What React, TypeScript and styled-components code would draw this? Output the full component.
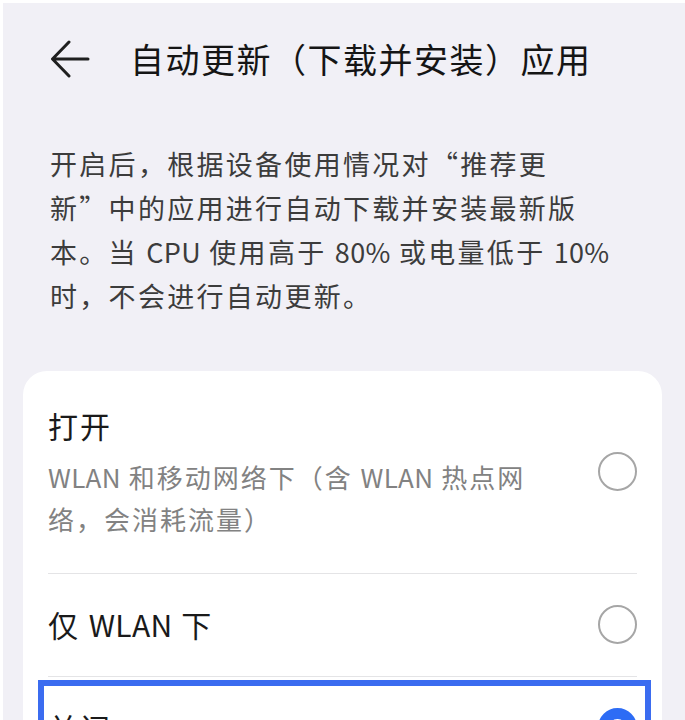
import React from "react";
import styled, { createGlobalStyle } from "styled-components";

const GlobalStyle = createGlobalStyle`
  html, body {
    margin: 0;
    padding: 0;
    background: #ffffff;
  }
  body {
    padding: 3px 0 0 3px;
    font-family: "Noto Sans CJK SC", "Noto Sans", sans-serif;
    overflow: hidden;
  }
`;

const Page = styled.div`
  background: #f1f0f6;
  min-height: 720px;
  display: flex;
  flex-direction: column;
`;

const Header = styled.header`
  height: 112px;
  display: flex;
  align-items: center;
  padding-left: 47px;
  gap: 40px;
`;

const BackButton = styled.button`
  border: none;
  background: none;
  padding: 0;
  width: 40px;
  height: 38px;
  display: flex;
  align-items: center;
  justify-content: center;
  cursor: pointer;
`;

const Title = styled.h1`
  margin: 0;
  font-size: 34px;
  font-weight: 400;
  letter-spacing: 1.5px;
  color: #151515;
  line-height: 44px;
  white-space: nowrap;
`;

const Description = styled.p`
  margin: 27px 0 0;
  padding: 0 40px 0 47px;
  font-size: 27px;
  line-height: 44px;
  letter-spacing: 2.3px;
  color: #3c3c3c;
`;

const Line = styled.span`
  display: block;
  white-space: nowrap;
`;

/* Latin words sit tighter than the CJK run around them */
const Latin = styled.span`
  letter-spacing: 0.3px;
`;

const Card = styled.section`
  margin: 53px 23px 0 20px;
  background: #ffffff;
  border-radius: 24px;
  padding: 0 25px 0 25px;
  display: flex;
  flex-direction: column;
`;

const Option = styled.div<{ $padTop: number; $padBottom: number; $focused?: boolean }>`
  position: relative;
  display: flex;
  align-items: center;
  justify-content: space-between;
  gap: 20px;
  padding: ${(p) => p.$padTop}px 0 ${(p) => p.$padBottom}px;
  & + & {
    border-top: 1px solid #e4e4e6;
  }
  ${(p) =>
    p.$focused &&
    `
    &::before {
      content: "";
      position: absolute;
      top: 3px;
      left: -10px;
      right: -14px;
      height: 200px;
      border: 6px solid #3b6cf0;
      pointer-events: none;
    }
  `}
`;

const OptionText = styled.div`
  display: flex;
  flex-direction: column;
  gap: 9px;
`;

const OptionTitle = styled.div`
  font-size: 30px;
  line-height: 44px;
  letter-spacing: 2px;
  color: #1a1a1a;
  white-space: nowrap;
`;

const OptionHint = styled.div`
  font-size: 26px;
  line-height: 42px;
  letter-spacing: 2px;
  color: #828282;
`;

const Radio = styled.span<{ $checked?: boolean }>`
  flex: none;
  width: 39px;
  height: 39px;
  box-sizing: border-box;
  border-radius: 50%;
  border: ${(p) => (p.$checked ? "11px solid #2d6cf5" : "2px solid #a6a6a6")};
  background: #ffffff;
`;

const BackArrow = () => (
  <svg width="40" height="38" viewBox="0 0 40 38" fill="none">
    <path
      d="M38 19H3M19 2L2.5 19L19 36"
      stroke="#1f1f1f"
      strokeWidth="3"
      strokeLinecap="round"
      strokeLinejoin="round"
    />
  </svg>
);

export default function App() {
  return (
    <>
      <GlobalStyle />
      <Page>
        <Header>
          <BackButton aria-label="返回">
            <BackArrow />
          </BackButton>
          <Title>自动更新（下载并安装）应用</Title>
        </Header>
        <Description>
          <Line>开启后，根据设备使用情况对“推荐更</Line>
          <Line>新”中的应用进行自动下载并安装最新版</Line>
          <Line>
            本。当 <Latin>CPU</Latin> 使用高于 <Latin>80%</Latin> 或电量低于 <Latin>10%</Latin>
          </Line>
          <Line>时，不会进行自动更新。</Line>
        </Description>
        <Card>
          <Option $padTop={32} $padBottom={33}>
            <OptionText>
              <OptionTitle>打开</OptionTitle>
              <OptionHint>
                <Line>
                  <Latin>WLAN</Latin> 和移动网络下（含 <Latin>WLAN</Latin> 热点网
                </Line>
                <Line>络，会消耗流量）</Line>
              </OptionHint>
            </OptionText>
            <Radio />
          </Option>
          <Option $padTop={28} $padBottom={30}>
            <OptionTitle>
              仅 <Latin>WLAN</Latin> 下
            </OptionTitle>
            <Radio />
          </Option>
          <Option $padTop={28} $padBottom={28} $focused>
            <OptionTitle>关闭</OptionTitle>
            <Radio $checked />
          </Option>
        </Card>
      </Page>
    </>
  );
}
